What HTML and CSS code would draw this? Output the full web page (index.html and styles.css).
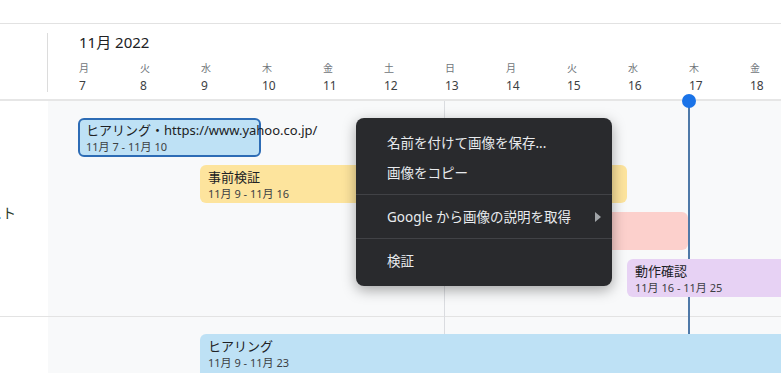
FILE: index.html
```html
<!DOCTYPE html>
<html lang="ja">
<head>
    <meta charset="UTF-8">
    <title>タイムライン</title>
    <link rel="stylesheet" href="styles.css">
</head>
<body>
    <div class="topbar"></div>

    <!-- 日付ヘッダー -->
    <div class="header">
        <div class="side"><span class="side-line"></span></div>
        <div class="scale">
            <div class="month">11月 2022</div>
            <div class="days">
                <div class="day"><span class="dow">月</span><span class="date">7</span></div>
                <div class="day"><span class="dow">火</span><span class="date">8</span></div>
                <div class="day"><span class="dow">水</span><span class="date">9</span></div>
                <div class="day"><span class="dow">木</span><span class="date">10</span></div>
                <div class="day"><span class="dow">金</span><span class="date">11</span></div>
                <div class="day"><span class="dow">土</span><span class="date">12</span></div>
                <div class="day"><span class="dow">日</span><span class="date">13</span></div>
                <div class="day"><span class="dow">月</span><span class="date">14</span></div>
                <div class="day"><span class="dow">火</span><span class="date">15</span></div>
                <div class="day"><span class="dow">水</span><span class="date">16</span></div>
                <div class="day"><span class="dow">木</span><span class="date">17</span></div>
                <div class="day"><span class="dow">金</span><span class="date">18</span></div>
            </div>
        </div>
    </div>

    <!-- レーン -->
    <div class="lanes">
        <div class="lane">
            <div class="side"><span class="lane-label">テスト</span></div>
            <div class="track">
                <div class="bar bar-blue selected" style="grid-column: 1 / 4;">
                    <span class="bar-title">ヒアリング・https://www.yahoo.co.jp/</span>
                    <span class="bar-date">11月 7 - 11月 10</span>
                </div>
                <div class="bar bar-yellow" style="grid-column: 3 / 10;">
                    <span class="bar-title">事前検証</span>
                    <span class="bar-date">11月 9 - 11月 16</span>
                </div>
                <div class="bar bar-red" style="grid-column: 6 / 11;"></div>
                <div class="bar bar-purple" style="grid-column: 10 / 20;">
                    <span class="bar-title">動作確認</span>
                    <span class="bar-date">11月 16 - 11月 25</span>
                </div>
            </div>
        </div>
        <div class="lane lane-last">
            <div class="side"></div>
            <div class="track">
                <div class="bar bar-blue" style="grid-column: 3 / 20;">
                    <span class="bar-title">ヒアリング</span>
                    <span class="bar-date">11月 9 - 11月 23</span>
                </div>
            </div>
        </div>

        <div class="week-line"></div>
        <div class="today-line"></div>
        <div class="today-dot"></div>
    </div>

    <!-- 右クリックメニュー -->
    <div class="menu">
        <div class="menu-item">名前を付けて画像を保存...</div>
        <div class="menu-item">画像をコピー</div>
        <div class="menu-sep"></div>
        <div class="menu-item has-sub">Google から画像の説明を取得<span class="sub-arrow"></span></div>
        <div class="menu-sep"></div>
        <div class="menu-item">検証</div>
    </div>
</body>
</html>
```

FILE: styles.css
```css
body {
    margin: 0;
    width: 781px;
    height: 373px;
    overflow: hidden;
    position: relative;
    background-color: #fff;
    font-family: "Noto Sans", "Noto Sans CJK JP", sans-serif;
    color: #202124;
}

.topbar {
    height: 23px;
    border-bottom: 1px solid #e2e2e2;
}

.side {
    width: 48px;
    flex-shrink: 0;
    background-color: #fff;
}

/* ヘッダー */
.header {
    display: flex;
    height: 75px;
    border-bottom: 2px solid #e6e6e6;
}

.header .side {
    display: flex;
    justify-content: flex-end;
    padding: 9px 0 7px;
}

.side-line {
    width: 1px;
    background-color: #dcdcdc;
}

.scale {
    padding: 8px 0 0 30px;
    overflow: hidden;
}

.month {
    font-size: 15px;
    line-height: 20px;
    padding-left: 1px;
}

.days {
    display: flex;
    margin-top: 9px;
}

.day {
    width: 61px;
    flex-shrink: 0;
    box-sizing: border-box;
    padding-left: 1px;
    display: flex;
    flex-direction: column;
}

.dow {
    font-size: 10px;
    line-height: 14px;
    color: #70757a;
}

.date {
    font-size: 12px;
    line-height: 18px;
    margin-top: 2px;
    color: #3c4043;
}

/* レーン */
.lanes {
    position: relative;
}

.lane {
    display: flex;
    border-bottom: 1px solid #e3e3e3;
}

.lane:first-child {
    height: 215px;
}

.lane-last {
    height: 56px;
    border-bottom: none;
}

.lane .side {
    display: flex;
    align-items: center;
    justify-content: flex-end;
    overflow: hidden;
    padding-right: 32px;
    box-sizing: border-box;
    white-space: nowrap;
}

.lane-label {
    font-size: 14px;
    color: #2b3a2b;
    margin-top: 6px;
}

.track {
    flex: 1;
    background-color: #f8f9fa;
    display: grid;
    grid-template-columns: repeat(20, 61px);
    grid-auto-rows: 38px;
    row-gap: 9px;
    padding: 17px 0 0 30px;
    overflow: hidden;
}

.lane-last .track {
    grid-auto-rows: 50px;
}

.bar {
    position: relative;
    z-index: 1;
    border-radius: 6px;
    padding: 4px 8px 0;
    display: flex;
    flex-direction: column;
    white-space: nowrap;
    min-width: 0;
}

.bar-title {
    font-size: 13px;
    line-height: 17px;
}

.bar-date {
    font-size: 11px;
    line-height: 15px;
    color: #3c4043;
}

.bar-blue {
    background-color: #bee1f5;
}

.bar-blue.selected {
    border: 2px solid #2d6cb5;
    padding: 2px 6px 0;
    height: 39px;
    box-sizing: border-box;
}

.bar-yellow {
    background-color: #fde49d;
}

.bar-red {
    background-color: #fcd0cc;
}

.bar-purple {
    background-color: #e7d2f4;
}

.week-line {
    position: absolute;
    top: 0;
    bottom: 0;
    left: 444px;
    width: 1px;
    background-color: #dadce0;
}

.today-line {
    position: absolute;
    top: 0;
    bottom: 0;
    left: 688px;
    width: 2px;
    background-color: #4f79a8;
}

.today-dot {
    position: absolute;
    z-index: 2;
    top: -7px;
    left: 682px;
    width: 14px;
    height: 14px;
    border-radius: 50%;
    background-color: #1a73e8;
}

/* メニュー */
.menu {
    position: absolute;
    z-index: 5;
    left: 356px;
    top: 118px;
    width: 256px;
    box-sizing: border-box;
    padding: 10px 0;
    background-color: #292a2d;
    border-radius: 8px;
    box-shadow: 0 4px 14px rgba(0, 0, 0, 0.35);
    color: #e8eaed;
}

.menu-item {
    height: 30px;
    line-height: 30px;
    padding-left: 31px;
    font-size: 13.5px;
    position: relative;
}

.menu-sep {
    height: 1px;
    margin: 6px 0 7px;
    background-color: #414246;
}

.sub-arrow {
    position: absolute;
    right: 11px;
    top: 10px;
    width: 0;
    height: 0;
    border-top: 5px solid transparent;
    border-bottom: 5px solid transparent;
    border-left: 6px solid #a0a4a8;
}
```
